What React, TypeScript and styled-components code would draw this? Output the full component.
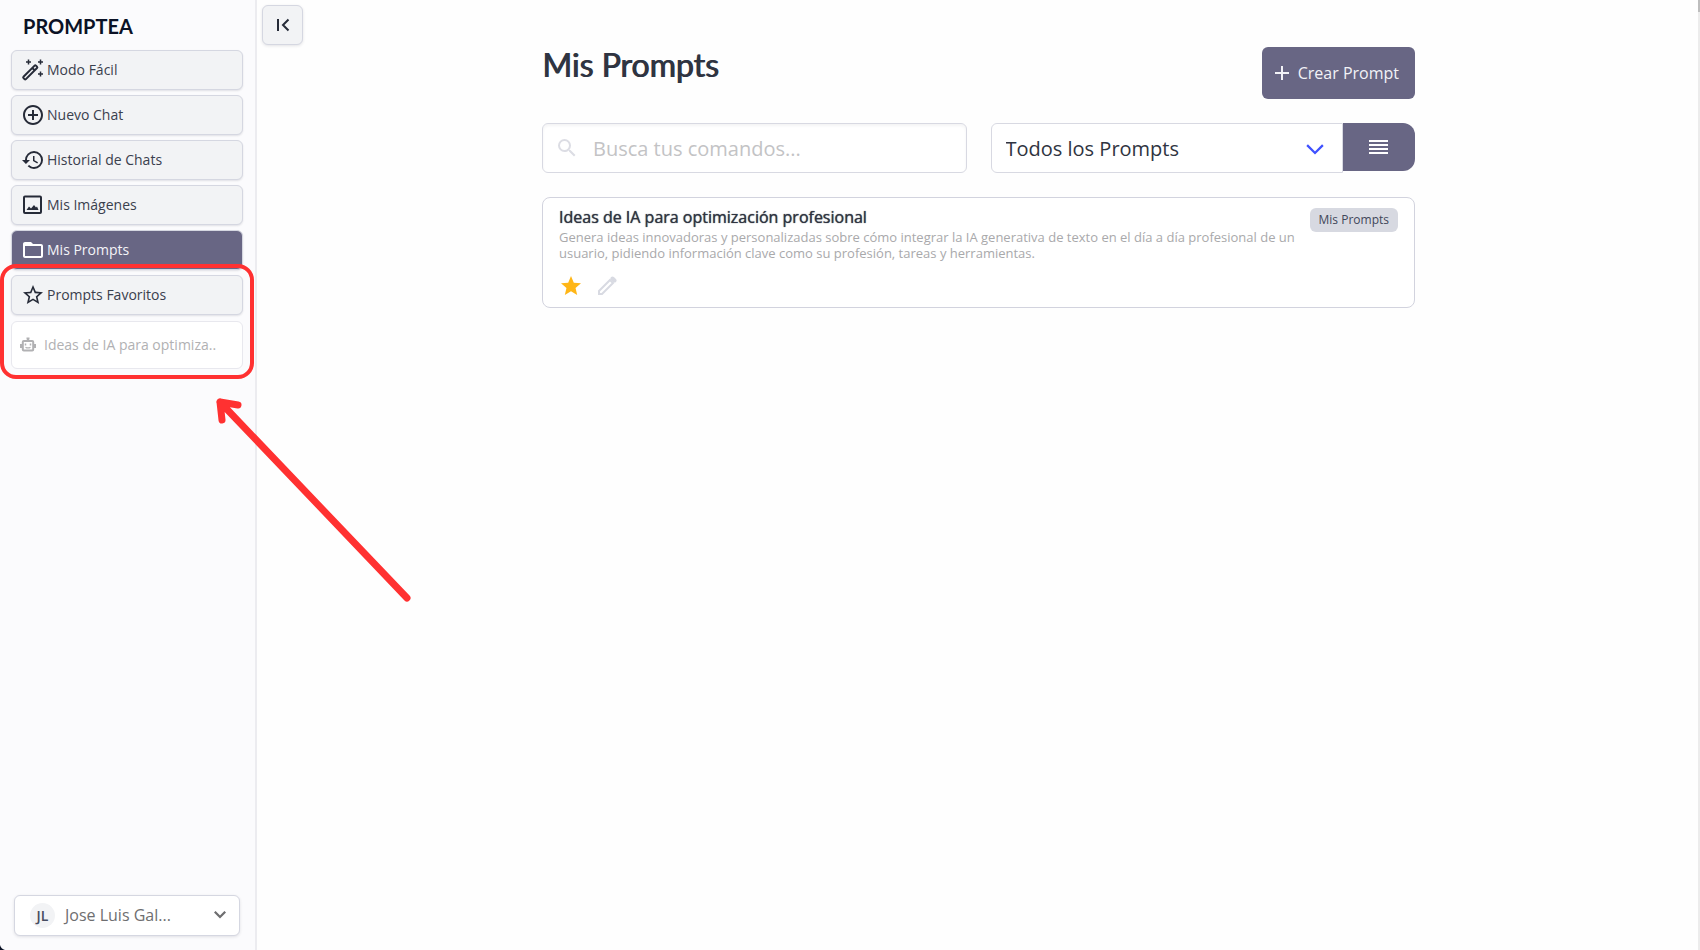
import React from 'react';
import styled, { createGlobalStyle, css } from 'styled-components';
import {
  MdHistory, MdFolderOpen, MdStarBorder, MdStar, MdAddCircleOutline, MdSearch, MdAdd,
} from 'react-icons/md';

const Global = createGlobalStyle`
  *, *::before, *::after { box-sizing: border-box; }
  body { margin: 0; background: #fefefe; color: #2f3441; font-family: "Open Sans", sans-serif; }
  button, input, select { font: inherit; color: inherit; margin: 0; }
  button { cursor: pointer; }
  svg { flex: none; display: block; }
`;

const Page = styled.div`
  position: relative;
  display: flex;
  min-height: 100vh;
  overflow: hidden;
`;

const Sidebar = styled.aside`
  display: flex;
  flex-direction: column;
  width: 257px;
  flex: none;
  padding: 14px 12px 14px 11px;
  background: #fbfbfd;
  border-right: 2px solid #ececf0;
`;

const Logo = styled.a`
  padding-left: 12px;
  margin-bottom: 12px;
  font-family: Lato, sans-serif;
  font-size: 20px;
  font-weight: 700;
  line-height: 24px;
  color: #0b1226;
  text-decoration: none;
`;

const Nav = styled.nav`
  display: flex;
  flex-direction: column;
  gap: 5px;
`;

const itemBase = css`
  display: flex;
  align-items: center;
  width: 100%;
  font-size: 14px;
  text-align: left;
  border-radius: 6px;
`;

const NavButton = styled.button<{ $active?: boolean }>`
  ${itemBase}
  gap: 2px;
  height: 40px;
  padding: 0 9px 1px;
  color: ${(p) => (p.$active ? '#f4f4f8' : '#3a404d')};
  background: ${(p) => (p.$active ? '#686684' : '#f2f3f5')};
  border: 1px solid #d5d7e1;
  box-shadow: 0 1px 2px rgba(30, 34, 60, 0.12);
  svg { color: ${(p) => (p.$active ? '#ffffff' : '#262b38')}; }
`;

const Favorites = styled.div`
  position: relative;
  display: flex;
  flex-direction: column;
  gap: 6px;
`;

const Highlight = styled.div`
  position: absolute;
  inset: -11px -11px -10px -11px;
  border: 4px solid #ff3131;
  border-radius: 16px;
  pointer-events: none;
`;

const FavoriteItem = styled.button`
  ${itemBase}
  gap: 8px;
  height: 48px;
  padding: 0 8px 1px;
  color: #b1b1b3;
  background: #ffffff;
  border: 1px solid #e8e8ee;
`;

const UserMenu = styled.button`
  display: flex;
  align-items: center;
  height: 41px;
  margin: auto 3px 0;
  padding: 0 13px 1px 15px;
  color: #6e6e70;
  font-size: 16px;
  background: #ffffff;
  border: 1px solid #d5d7e1;
  border-radius: 6px;
  box-shadow: 0 1px 3px rgba(30, 34, 60, 0.12);
`;

const Avatar = styled.span`
  display: grid;
  place-items: center;
  width: 25px;
  height: 25px;
  margin-right: 10px;
  border-radius: 50%;
  background: #f2f3f5;
  color: #464c60;
  font-size: 14px;
  font-weight: 600;
`;

const UserName = styled.span`
  flex: 1;
  text-align: left;
`;

const Main = styled.main`
  position: relative;
  flex: 1;
  min-width: 0;
  padding: 47px 24px 24px;
`;

const Collapse = styled.button`
  position: absolute;
  top: 5px;
  left: 5px;
  display: grid;
  place-items: center;
  width: 41px;
  height: 40px;
  padding: 0;
  color: #262b38;
  background: #f2f3f5;
  border: 1px solid #d5d7e1;
  border-radius: 6px;
  box-shadow: 0 1px 3px rgba(30, 34, 60, 0.12);
`;

const Content = styled.div`
  display: flex;
  flex-direction: column;
  gap: 24px;
  max-width: 873px;
  margin: 0 auto;
`;

const Header = styled.header`
  display: flex;
  align-items: flex-start;
  justify-content: space-between;
`;

const Title = styled.h1`
  margin: 0;
  font-family: Lato, sans-serif;
  font-size: 32px;
  font-weight: 400;
  line-height: 36px;
  text-shadow: 1px 0 0 currentColor;
`;

const CreateButton = styled.button`
  display: flex;
  align-items: center;
  gap: 4px;
  height: 52px;
  padding: 0 16px 0 8px;
  font-size: 16px;
  color: #f2f2f7;
  background: #686684;
  border: 0;
  border-radius: 6px;
`;

const Filters = styled.div`
  display: grid;
  grid-template-columns: minmax(0, 1fr) minmax(0, 1fr);
  align-items: start;
  gap: 24px;
`;

const SearchBox = styled.label`
  display: flex;
  align-items: center;
  gap: 14px;
  min-width: 0;
  height: 50px;
  padding: 0 12px;
  color: #dcdde4;
  background: #ffffff;
  border: 1px solid #d8d9e2;
  border-radius: 6px;
  box-shadow: inset 0 2px 3px rgba(30, 34, 60, 0.05);
`;

const SearchInput = styled.input`
  flex: 1;
  min-width: 0;
  padding: 0;
  font-size: 20px;
  color: #2f3441;
  background: none;
  border: 0;
  outline: 0;
  &::placeholder { color: #c3c3c5; opacity: 1; }
`;

const FilterGroup = styled.div`
  display: flex;
  align-items: flex-start;
  min-width: 0;
`;

const SelectBox = styled.div`
  position: relative;
  flex: 1;
  min-width: 0;
  svg { position: absolute; right: 19px; top: 21px; color: #3f51ff; pointer-events: none; }
`;

const Select = styled.select`
  width: 100%;
  height: 50px;
  padding: 0 40px 0 14px;
  font-size: 20px;
  appearance: none;
  background: #ffffff;
  border: 1px solid #d8d9e2;
  border-radius: 6px 0 0 6px;
`;

const ListButton = styled.button`
  display: grid;
  place-items: center;
  width: 72px;
  height: 48px;
  padding: 0;
  color: #ffffff;
  background: #686684;
  border: 0;
  border-radius: 0 12px 12px 0;
`;

const Card = styled.article`
  display: flex;
  align-items: flex-start;
  justify-content: space-between;
  gap: 8px;
  padding: 8px 16px 9px;
  background: #ffffff;
  border: 1px solid #d2d3de;
  border-radius: 8px;
`;

const CardBody = styled.div`
  min-width: 0;
`;

const CardTitle = styled.h2`
  margin: 0 0 1px;
  font-size: 16px;
  font-weight: 400;
  line-height: 22px;
  text-shadow: 0 0 1px currentColor;
`;

const Description = styled.p`
  margin: 0 0 13px;
  font-size: 13px;
  line-height: 16px;
  color: #a9a9ab;
`;

const Actions = styled.div`
  display: flex;
  gap: 12px;
`;

const IconButton = styled.button`
  display: grid;
  place-items: center;
  width: 24px;
  height: 24px;
  padding: 0;
  background: none;
  border: 0;
`;

const Tag = styled.span`
  flex: none;
  margin-top: 2px;
  padding: 0 9px;
  font-size: 12px;
  line-height: 24px;
  color: #41475a;
  background: #d7d9e1;
  border-radius: 6px;
`;

const ScrollTrack = styled.div`
  position: absolute;
  top: 0;
  right: 0;
  bottom: 0;
  width: 2px;
  background: #ececec;
  &::before { content: ''; display: block; height: 12px; background: #bdbdbd; }
`;

const Arrow = styled.svg`
  position: absolute;
  left: 210px;
  top: 390px;
  pointer-events: none;
`;

const Corner = styled.svg`
  position: absolute;
  left: 0;
  bottom: 0;
`;

const WandIcon = () => (
  <svg width="24" height="24" viewBox="-1 -1 24 24" fill="none" stroke="currentColor" strokeWidth="2" aria-hidden="true">
    <path d="M1.500 17.700 12.600 6.600a1 1 0 0 1 1.400 0l1 1a1 1 0 0 1 0 1.400L3.900 20.100a1 1 0 0 1-1.400 0l-1-1a1 1 0 0 1 0-1.400ZM10.300 9l2.400 2.400" />
    <path d="M6.500 .5v5M4 3h5M18.500 .5v5M16 3h5M18.500 12.500v5M16 15h5" strokeWidth="1.500" />
  </svg>
);

const ImageIcon = () => (
  <svg width="24" height="24" viewBox="-1 -1 24 24" fill="none" stroke="currentColor" strokeWidth="2" aria-hidden="true">
    <rect x="2" y="2.500" width="17" height="16.500" rx="1" />
    <path d="m4.500 16 2.500-3.500 2 2 3-3.500 2 2.500 1-1 1.500 3.500Z" fill="currentColor" stroke="none" />
  </svg>
);

const RobotIcon = () => (
  <svg width="16" height="16" viewBox="0 0 16 16" fill="none" stroke="currentColor" strokeWidth="2" aria-hidden="true">
    <rect x="2.800" y="4" width="10.400" height="9.500" rx="1" />
    <path d="M8 4V1M6.500 1.500h3M1 7v4M15 7v4" />
    <path d="M5.500 10.200q2.500 1.500 5 0" strokeWidth="1.200" />
    <path d="M5.500 6.500v2M10.500 6.500v2" strokeWidth="1.500" />
  </svg>
);

const Chevron = ({ size, width }: { size: number; width: number }) => (
  <svg width={size} height={(size * 10) / 16} viewBox="0 0 16 10" fill="none" stroke="currentColor" strokeWidth={width} aria-hidden="true">
    <path d="m1 1 7 7 7-7" />
  </svg>
);

const PencilIcon = () => (
  <svg width="20" height="20" viewBox="0 0 20 20" fill="none" stroke="#d8dae2" strokeWidth="2" aria-hidden="true">
    <path d="M2 18v-3L13 4l3 3L5 18Z" />
    <path d="m15.500 2.500 2 2" strokeWidth="4" strokeLinejoin="round" strokeLinecap="round" />
  </svg>
);

export default function App() {
  return (
    <Page>
      <Global />
      <Sidebar>
        <Logo href="#">PROMPTEA</Logo>
        <Nav>
          <NavButton><WandIcon />Modo Fácil</NavButton>
          <NavButton><MdAddCircleOutline size={24} />Nuevo Chat</NavButton>
          <NavButton><MdHistory size={24} />Historial de Chats</NavButton>
          <NavButton><ImageIcon />Mis Imágenes</NavButton>
          <NavButton $active><MdFolderOpen size={24} />Mis Prompts</NavButton>
          <Favorites>
            <NavButton><MdStarBorder size={24} />Prompts Favoritos</NavButton>
            <FavoriteItem><RobotIcon />Ideas de IA para optimiza..</FavoriteItem>
            <Highlight />
          </Favorites>
        </Nav>
        <UserMenu>
          <Avatar>JL</Avatar>
          <UserName>Jose Luis Gal...</UserName>
          <Chevron size={12} width={3} />
        </UserMenu>
      </Sidebar>
      <Main>
        <Collapse aria-label="Ocultar menú">
          <svg width="14" height="14" viewBox="0 0 14 14" fill="none" stroke="currentColor" strokeWidth="2" aria-hidden="true">
            <path d="M2 1v12M12.500 1.500 7 7l5.500 5.500" />
          </svg>
        </Collapse>
        <Content>
          <Header>
            <Title>Mis Prompts</Title>
            <CreateButton><MdAdd size={24} />Crear Prompt</CreateButton>
          </Header>
          <Filters>
            <SearchBox>
              <MdSearch size={24} />
              <SearchInput type="search" placeholder="Busca tus comandos..." aria-label="Buscar" />
            </SearchBox>
            <FilterGroup>
              <SelectBox>
                <Select aria-label="Filtrar prompts"><option>Todos los Prompts</option></Select>
                <Chevron size={18} width={2} />
              </SelectBox>
              <ListButton aria-label="Vista de lista">
                <svg width="20" height="14" viewBox="0 0 20 14" stroke="currentColor" strokeWidth="2" aria-hidden="true">
                  <path d="M0 1h19M0 5h19M0 9h19M0 13h19" />
                </svg>
              </ListButton>
            </FilterGroup>
          </Filters>
          <Card>
            <CardBody>
              <CardTitle>Ideas de IA para optimización profesional</CardTitle>
              <Description>
                Genera ideas innovadoras y personalizadas sobre cómo integrar la IA generativa de texto en el día a día profesional de un usuario, pidiendo información clave como su profesión, tareas y herramientas.
              </Description>
              <Actions>
                <IconButton aria-label="Favorito"><MdStar size={24} color="#ffb617" /></IconButton>
                <IconButton aria-label="Editar"><PencilIcon /></IconButton>
              </Actions>
            </CardBody>
            <Tag>Mis Prompts</Tag>
          </Card>
        </Content>
      </Main>
      <ScrollTrack />
      <Arrow width="206" height="216" viewBox="0 0 206 216" fill="none" stroke="#ff3131" strokeWidth="7" strokeLinecap="round" strokeLinejoin="round" aria-hidden="true">
        <path d="M197 208 10 12M28 15 10 12l2 18" />
      </Arrow>
      <Corner width="5" height="5" viewBox="0 0 5 5" aria-hidden="true">
        <path d="M0 0Q1 4 5 5H0Z" fill="#0b1226" />
      </Corner>
    </Page>
  );
}
